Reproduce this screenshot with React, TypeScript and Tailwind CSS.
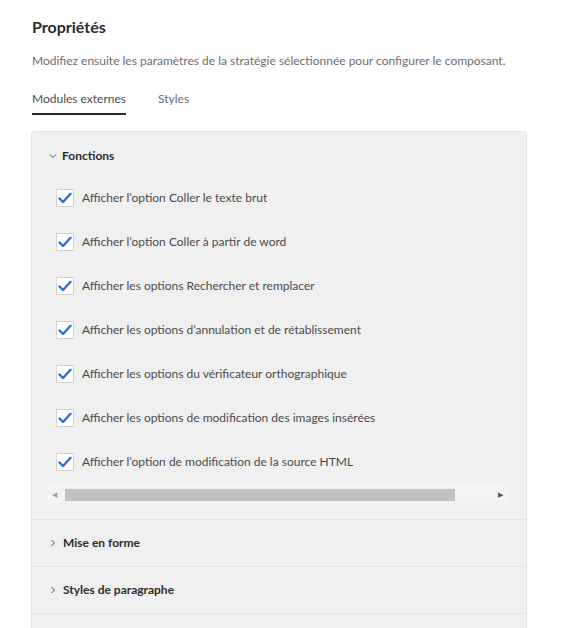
const OPTIONS = [
  "Afficher l’option Coller le texte brut",
  "Afficher l’option Coller à partir de word",
  "Afficher les options Rechercher et remplacer",
  "Afficher les options d’annulation et de rétablissement",
  "Afficher les options du vérificateur orthographique",
  "Afficher les options de modification des images insérées",
  "Afficher l’option de modification de la source HTML",
];

function Check() {
  return (
    <span className="flex h-[18px] w-[18px] shrink-0 items-center justify-center border border-[#d0d0d0] bg-white">
      <svg width="14" height="12" viewBox="0 0 14 12">
        <path d="M1.5 6.5 L5 10 L12.5 1.8" fill="none" stroke="#2d6fd6" strokeWidth="2.4" strokeLinecap="round" strokeLinejoin="round" />
      </svg>
    </span>
  );
}

function Chevron({ open }: { open?: boolean }) {
  return (
    <svg width="8" height="8" viewBox="0 0 8 8" className="shrink-0">
      {open ? (
        <path d="M1 2.5 L4 5.5 L7 2.5" fill="none" stroke="#4b4b4b" strokeWidth="1" />
      ) : (
        <path d="M2.5 1 L5.5 4 L2.5 7" fill="none" stroke="#4b4b4b" strokeWidth="1" />
      )}
    </svg>
  );
}

export default function App() {
  return (
    <div className="min-h-screen bg-white text-[#2c2c2c]" style={{ fontFamily: "Lato, 'Open Sans', sans-serif" }}>
      <div className="pl-8 pt-[15px]">
        <h1 className="text-[16px] font-bold leading-6">Propriétés</h1>
        <p className="mt-[14px] text-[12px] leading-4 text-[#6e6e6e]">
          Modifiez ensuite les paramètres de la stratégie sélectionnée pour configurer le composant.
        </p>
        <div className="mt-[21px] flex gap-8 text-[12px]">
          <div className="border-b-2 border-[#2c2c2c] pb-[5px] text-[#4b4b4b]">Modules externes</div>
          <div className="pb-[5px] text-[#6e6e6e]">Styles</div>
        </div>
      </div>

      <div className="ml-[31px] mt-[16px] w-[496px] rounded-t border border-b-0 border-[#e4e4e4] bg-[#f0f0f0]">
        <div className="flex items-center gap-[5px] pl-[17px] pt-[15px] text-[12px] font-bold text-[#2c2c2c]">
          <Chevron open />
          <span>Fonctions</span>
        </div>
        <div className="mt-[24px] flex flex-col gap-[26px] pl-[24px]">
          {OPTIONS.map((o) => (
            <label key={o} className="flex items-center gap-2 text-[12px] leading-[18px] text-[#4b4b4b]">
              <Check />
              <span>{o}</span>
            </label>
          ))}
        </div>
        <div className="mx-[16px] mt-[15px] flex h-[17px] items-center bg-[#f3f3f3] px-[4px]">
          <span className="text-[7px] leading-none text-[#a0a0a0]">◀</span>
          <div className="ml-[8px] h-[12px] w-[390px] bg-[#c1c1c1]" />
          <span className="ml-auto mr-[3px] text-[7px] leading-none text-[#505050]">▶</span>
        </div>
        <div className="mt-[16px] border-t border-[#e4e4e4]">
          <div className="flex h-[47px] items-center gap-[6px] border-b border-[#e4e4e4] pl-[17px] text-[12px] font-bold">
            <Chevron />
            <span>Mise en forme</span>
          </div>
          <div className="flex h-[47px] items-center gap-[6px] border-b border-[#e4e4e4] pl-[17px] text-[12px] font-bold">
            <Chevron />
            <span>Styles de paragraphe</span>
          </div>
          <div className="h-[20px]" />
        </div>
      </div>
    </div>
  );
}
